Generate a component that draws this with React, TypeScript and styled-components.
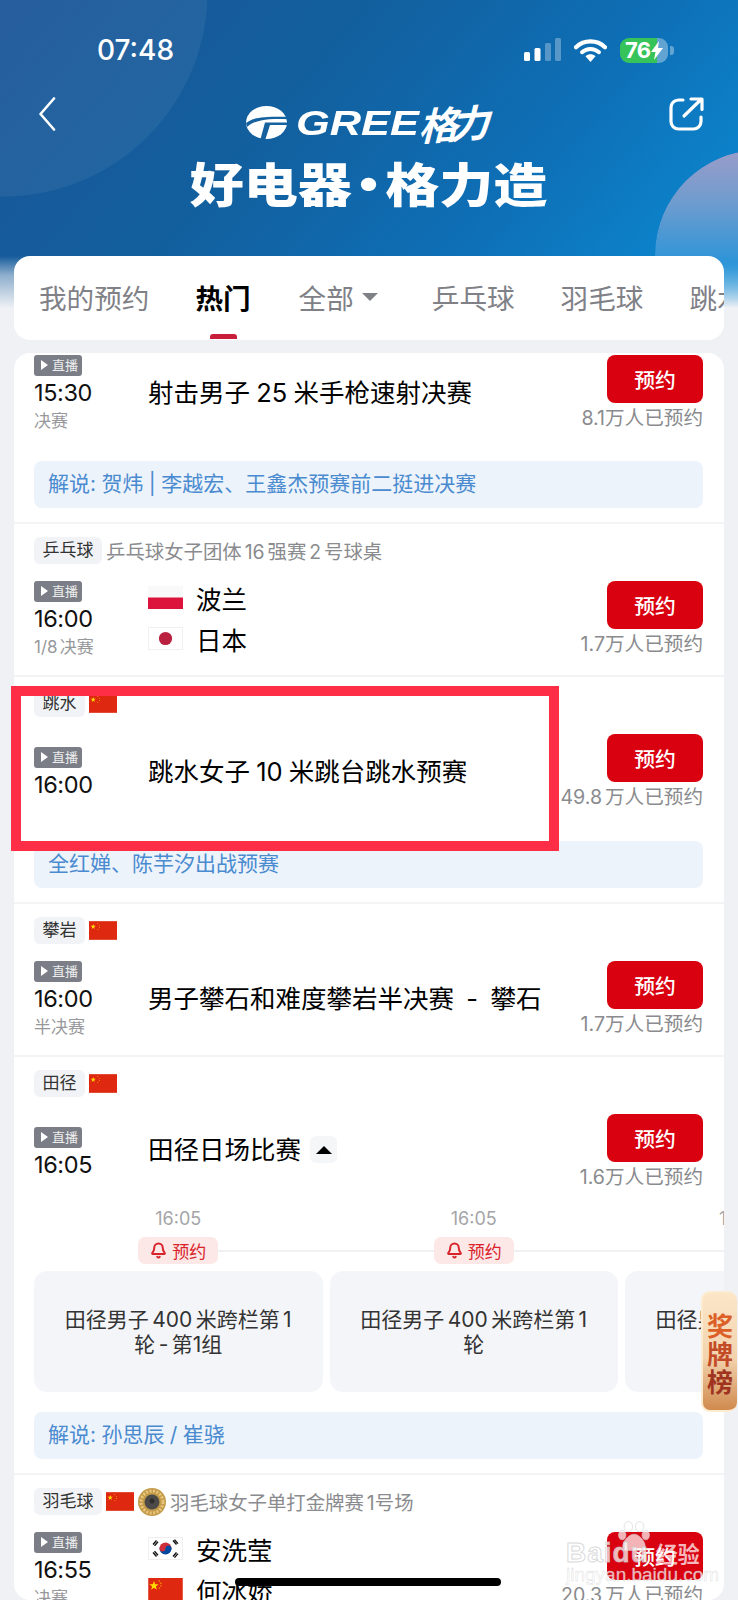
import React from 'react';
import styled, { createGlobalStyle } from 'styled-components';
import { Bell } from 'lucide-react';

const Global = createGlobalStyle`
  html, body { margin: 0; padding: 0; background: #eff1f5; }
  body { font-family: "Inter", "Noto Sans CJK SC", sans-serif; }
  * { box-sizing: border-box; }
`;

const Page = styled.div`
  position: relative;
  width: 738px;
  height: 1600px;
  overflow: hidden;
  display: flex;
  flex-direction: column;
  background: #eff1f5;
`;

const Hero = styled.header`
  position: relative;
  flex: none;
  padding: 34px 14px 0;
  height: 340px;
  color: #fff;
  background:
    linear-gradient(to bottom, rgba(239,241,245,0) 256px, rgba(239,241,245,.55) 275px, rgba(239,241,245,1) 308px),
    radial-gradient(circle 205px at 3px -8px, rgba(255,255,255,.055) 99.5%, rgba(255,255,255,0) 100%),
    linear-gradient(130deg, #1b5597 0%, #12609f 38%, #0e6fb6 65%, #0a90d8 100%);
`;

const Orb = styled.div`
  position: absolute;
  left: 655px;
  top: 150px;
  width: 210px;
  height: 210px;
  border-radius: 50%;
  background: linear-gradient(to bottom, #9a9cc9 0%, #6f9ccf 25%, #2a94d8 55%, #1a8fd8 70%);
  -webkit-mask-image: linear-gradient(to bottom, #000 50%, transparent 75%);
  mask-image: linear-gradient(to bottom, #000 50%, transparent 75%);
`;

const StatusRow = styled.div`
  position: relative;
  display: flex;
  align-items: center;
  justify-content: space-between;
  height: 32px;
  padding: 0 50px 0 83px;
`;

const Clock = styled.div`
  font-family: "Inter", sans-serif;
  font-size: 28px;
  font-weight: 500;
  line-height: 32px;
`;

const StatusIcons = styled.div`
  display: flex;
  align-items: center;
  gap: 13px;
`;

const Battery = styled.div`
  position: relative;
  width: 48px;
  height: 25px;
  border-radius: 9px;
  overflow: hidden;
  background: linear-gradient(to right, #36c45a 0 37px, rgba(255,255,255,.35) 37px);
  display: flex;
  align-items: center;
  gap: 1px;
  padding-left: 5px;
  font-family: "Inter", sans-serif;
  font-size: 22px;
  font-weight: 700;
  letter-spacing: -.8px;
`;

const BatteryTip = styled.div`
  width: 4px;
  height: 9px;
  margin-left: -11px;
  border-radius: 0 3px 3px 0;
  background: rgba(255,255,255,.35);
`;

const NavRow = styled.div`
  position: relative;
  display: flex;
  justify-content: space-between;
  align-items: flex-start;
  height: 110px;
  margin-top: 31px;
  padding: 0 20px 0 24px;
`;

const Brand = styled.div`
  display: flex;
  flex-direction: column;
  align-items: center;
  margin-left: 12px;
`;

const LogoRow = styled.div`
  display: flex;
  align-items: center;
  height: 50px;
  margin-left: -6px;
`;

const GreeText = styled.span`
  display: inline-block;
  width: 124px;
  margin-left: 9px;
  font-family: "Liberation Sans", sans-serif;
  font-size: 35px;
  font-weight: 700;
  font-style: italic;
  line-height: 1;
  transform: scaleX(1.24);
  transform-origin: left center;
`;

const GeliText = styled.span`
  display: inline-block;
  margin-left: 3px;
  font-family: "Noto Sans CJK SC", sans-serif;
  font-size: 39px;
  font-weight: 700;
  letter-spacing: -8px;
  line-height: 1;
  transform: skewX(-18deg) rotate(-4deg);
`;

const Slogan = styled.div`
  font-family: "Noto Sans CJK SC", sans-serif;
  font-size: 47px;
  font-weight: 900;
  line-height: 52px;
  margin-top: 9px;
  white-space: nowrap;
  transform: scaleX(1.15);
`;

const SloganDot = styled.span`
  margin: 0 -9px;
`;

const Tabs = styled.nav`
  position: relative;
  display: flex;
  align-items: center;
  gap: 46px;
  height: 84px;
  margin-top: 49px;
  padding: 0 0 2px 25px;
  overflow: hidden;
  background: #fff;
  border-radius: 16px;
  font-family: "Noto Sans CJK SC", sans-serif;
`;

const Tab = styled.div<{ $active?: boolean }>`
  position: relative;
  flex: none;
  display: flex;
  align-items: center;
  gap: 8px;
  font-size: 27.6px;
  line-height: 36px;
  font-weight: ${p => (p.$active ? 700 : 400)};
  color: ${p => (p.$active ? '#000' : '#7f8187')};
  margin-right: ${p => (p.$active ? 2 : 0)}px;
`;

const TabCaret = styled.i`
  width: 0;
  height: 0;
  margin-right: 8px;
  border-left: 8px solid transparent;
  border-right: 8px solid transparent;
  border-top: 8px solid #7f8187;
`;

const TabMark = styled.span`
  position: absolute;
  left: 15px;
  bottom: -24px;
  width: 27px;
  height: 5px;
  border-radius: 3px 3px 0 0;
  background: #c81e3a;
`;

const List = styled.main`
  flex: 1;
  min-height: 0;
  margin: 13px 14px 0;
  overflow: hidden;
  background: #fff;
  border-radius: 16px;
  font-family: "Inter", "Noto Sans CJK SC", sans-serif;
  word-spacing: -2.5px;
`;

const Row = styled.section<{ $first?: boolean; $bottom?: number }>`
  padding: ${p => (p.$first ? 2 : 13)}px 21px ${p => p.$bottom ?? 14}px 20px;
  border-top: ${p => (p.$first ? 0 : 2)}px solid #f3f4f6;
`;

const TagLine = styled.div`
  display: flex;
  align-items: center;
  gap: 4px;
  height: 27px;
  margin-bottom: 17px;
`;

const Tag = styled.span`
  height: 27px;
  padding: 0 8.5px;
  border-radius: 6px;
  background: #f2f3f6;
  color: #333;
  font-size: 17px;
  line-height: 27px;
`;

const SubTitle = styled.span`
  color: #8a8b8e;
  font-size: 19.4px;
  white-space: nowrap;
`;

const Main = styled.div`
  display: flex;
  align-items: center;
  height: 75px;
`;

const LeftCol = styled.div<{ $noSub?: boolean }>`
  flex: none;
  width: 114px;
  padding-top: ${p => (p.$noSub ? 4 : 0)}px;
`;

const Live = styled.div`
  display: flex;
  align-items: center;
  gap: 4px;
  width: 48px;
  height: 21px;
  padding-left: 7px;
  border-radius: 3px;
  background: #7b7e87;
  color: #eee;
  font-size: 13px;
  line-height: 21px;
  &::before {
    content: '';
    border-left: 7px solid #fff;
    border-top: 5px solid transparent;
    border-bottom: 5px solid transparent;
  }
`;

const Time = styled.div`
  font-size: 23.5px;
  line-height: 33px;
  letter-spacing: -.4px;
  color: #111;
`;

const Stage = styled.div`
  margin-top: 2px;
  color: #97989b;
  font-size: 17px;
  line-height: 20px;
  white-space: nowrap;
`;

const Middle = styled.div`
  flex: 1;
  min-width: 0;
  display: flex;
  flex-direction: column;
`;

const Teams = styled(Middle)`
  gap: 17px;
  margin-top: -2px;
`;

const TitleLine = styled.div`
  display: flex;
  align-items: center;
  gap: 9px;
  margin-top: -4px;
`;

const Title = styled.div`
  font-size: 25.5px;
  line-height: 34px;
  color: #000;
  white-space: nowrap;
  word-spacing: -1px;
`;

const Expand = styled.div`
  display: flex;
  align-items: center;
  justify-content: center;
  width: 27px;
  height: 27px;
  border-radius: 6px;
  background: #f5f6f8;
  &::before {
    content: '';
    border-left: 8px solid transparent;
    border-right: 8px solid transparent;
    border-bottom: 8px solid #000;
  }
`;

const Team = styled.div`
  display: flex;
  align-items: center;
  gap: 13px;
  height: 24px;
  font-size: 25.5px;
  color: #000;
  white-space: nowrap;
`;

const RightCol = styled.div`
  flex: none;
  display: flex;
  flex-direction: column;
  align-items: flex-end;
  gap: 3px;
  height: 75px;
`;

const Reserve = styled.button`
  width: 96px;
  height: 48px;
  padding: 0;
  border: 0;
  border-radius: 8px;
  background: #d9000f;
  color: #fff;
  font-family: "Noto Sans CJK SC", sans-serif;
  font-size: 20.8px;
  font-weight: 500;
`;

const Count = styled.div`
  color: #8a8b8e;
  font-size: 19.6px;
  line-height: 24px;
  white-space: nowrap;
`;

const Note = styled.div<{ $top?: number }>`
  height: 47px;
  margin-top: ${p => p.$top ?? 32}px;
  padding-left: 14px;
  border-radius: 8px;
  background: #edf3fb;
  color: #4a8bd0;
  font-size: 21px;
  line-height: 46px;
  white-space: nowrap;
  word-spacing: -.5px;
`;

const Track = styled.div`
  display: flex;
  gap: 7px;
  margin-top: 20px;
  margin-right: -21px;
  width: 690px;
`;

const Stop = styled.div<{ $w: number }>`
  flex: none;
  width: ${p => p.$w}px;
`;

const StopTime = styled.div`
  text-align: center;
  color: #a4a5a8;
  font-size: 18px;
  line-height: 20px;
`;

const PillLine = styled.div<{ $first?: boolean }>`
  position: relative;
  display: flex;
  justify-content: center;
  height: 27px;
  margin-top: 8px;
  &::before {
    content: '';
    position: absolute;
    left: ${p => (p.$first ? '50%' : '0')};
    right: -7px;
    top: 13px;
    height: 2px;
    background: #f1f1f3;
  }
`;

const Pill = styled.div`
  position: relative;
  display: flex;
  align-items: center;
  gap: 5px;
  width: 80px;
  height: 27px;
  padding-left: 12px;
  border-radius: 7px;
  background: #fde8e8;
  color: #d8232a;
  font-size: 17px;
`;

const StopCard = styled.div`
  display: flex;
  align-items: center;
  justify-content: center;
  height: 121px;
  margin-top: 7px;
  padding: 0 4px;
  border-radius: 13px;
  background: #f4f5f8;
  color: #333;
  font-size: 21px;
  line-height: 25px;
  text-align: center;
  white-space: pre-line;
`;

const Medals = styled.aside`
  position: absolute;
  right: 1px;
  top: 1291px;
  width: 36px;
  height: 121px;
  padding-top: 18px;
  border-radius: 9px;
  border: 2px solid #fcebcf;
  border-right: 0;
  background: linear-gradient(to bottom, #fbe6c8 0%, #f3d3ae 55%, #d08a4e 100%);
  font-family: "Noto Sans CJK SC", sans-serif;
  font-size: 26px;
  font-weight: 700;
  line-height: 28px;
  text-align: center;
`;

const MedalChar = styled.div<{ $c: string }>`
  color: ${p => p.$c};
`;

const Mark = styled.div`
  position: absolute;
  left: 11px;
  top: 686px;
  width: 548px;
  height: 165px;
  border: 10.5px solid #ff2e47;
`;

const Watermark = styled.div`
  position: absolute;
  left: 566px;
  top: 1520px;
  width: 134px;
  height: 70px;
  color: rgba(255,255,255,.72);
`;

const WmTop = styled.div`
  position: relative;
  display: flex;
  align-items: baseline;
  padding-top: 16px;
  font-family: "Liberation Sans", sans-serif;
  font-size: 28px;
  font-weight: 700;
  line-height: 32px;
  letter-spacing: 1px;
  -webkit-text-stroke: 1px rgba(200,200,200,.7);
`;

const WmCn = styled.span`
  margin-left: 7px;
  font-family: "Noto Sans CJK SC", sans-serif;
  font-size: 22px;
  letter-spacing: 0;
  -webkit-text-stroke: 0;
`;

const WmUrl = styled.div`
  margin-top: -4px;
  font-family: "Liberation Sans", sans-serif;
  font-size: 19px;
  line-height: 20px;
  -webkit-text-stroke: .4px rgba(200,200,200,.7);
  white-space: nowrap;
`;

const Paw = styled.svg`
  position: absolute;
  left: 52px;
  top: 1px;
`;

const HomeBar = styled.div`
  position: absolute;
  left: 235px;
  top: 1578px;
  width: 266px;
  height: 8px;
  border-radius: 4px;
  background: #000;
`;

const FlagSvg = styled.svg`
  flex: none;
  display: block;
`;

const CN = ({ w = 28, h = 19, big = false }: { w?: number; h?: number; big?: boolean }) => (
  <FlagSvg width={w} height={h} viewBox="0 0 30 20">
    <rect width="30" height="20" fill="#de2910" />
    {big ? (
      <polygon points="5,2.500 6,5.500 9,5.500 6.600,7.300 7.500,10.200 5,8.400 2.500,10.200 3.400,7.300 1,5.500 4,5.500" fill="#ffde00" />
    ) : (
      <polygon points="4.500,3 5.200,5 7.300,5 5.600,6.300 6.200,8.300 4.500,7.100 2.800,8.300 3.400,6.300 1.700,5 3.800,5" fill="#ffde00" />
    )}
    <circle cx="9.500" cy="2.500" r=".5" fill="#ffde00" />
    <circle cx="11" cy="4.500" r=".5" fill="#ffde00" />
    <circle cx="11" cy="6.800" r=".5" fill="#ffde00" />
    <circle cx="9.500" cy="8.800" r=".5" fill="#ffde00" />
  </FlagSvg>
);

const PL = () => (
  <FlagSvg width={35} height={23} viewBox="0 0 35 23">
    <rect width="35" height="11.5" fill="#f9f9f9" />
    <rect y="11.5" width="35" height="11.5" fill="#dc143c" />
  </FlagSvg>
);

const JP = () => (
  <FlagSvg width={35} height={23} viewBox="0 0 35 23">
    <rect x=".5" y=".5" width="34" height="22" fill="#fff" stroke="#f0f0f0" />
    <circle cx="17.5" cy="11.5" r="6.6" fill="#b9213f" />
  </FlagSvg>
);

const KR = () => (
  <FlagSvg width={35} height={23} viewBox="0 0 35 23">
    <rect x=".5" y=".5" width="34" height="22" fill="#fff" stroke="#efefef" />
    <path d="M11.5 11.5a6 6 0 0 1 12 0z" fill="#cd2e3a" />
    <path d="M11.5 11.5a6 6 0 0 0 12 0z" fill="#0047a0" />
    <circle cx="14.5" cy="11.5" r="3" fill="#cd2e3a" />
    <circle cx="20.5" cy="11.5" r="3" fill="#0047a0" />
    <g stroke="#111" strokeWidth="1.4">
      <path d="M5 7.5l3.500-4M6.500 8.800L10 4.800" />
      <path d="M25 3.500l3.500 4M26.500 2.600l3.500 4" />
      <path d="M5 15.500l3.500 4M6.500 14.200l3.500 4" />
      <path d="M25 19.500l3.500-4M26.500 20.600l3.500-4" />
    </g>
  </FlagSvg>
);

const GoldMedal = () => (
  <FlagSvg width={28} height={28} viewBox="0 0 28 28">
    <circle cx="14" cy="14" r="14" fill="#c39a4a" />
    <circle cx="14" cy="14" r="11" fill="none" stroke="#e6c77c" strokeWidth="3" strokeDasharray="2 1.5" />
    <circle cx="14" cy="14" r="7.5" fill="#4c4a48" />
    <circle cx="14" cy="13" r="2.5" fill="#2f2e2d" />
  </FlagSvg>
);

const Swirl = () => (
  <svg width="41" height="33" viewBox="0 0 41 33">
    <ellipse cx="20.5" cy="16.5" rx="20.5" ry="16.5" fill="#fff" />
    <path d="M0 17C6 12 14 10.500 41 10.800V13.200C30 12.800 22 13.200 15 14.500 9 15.700 4 18 1 21z" fill="#16629f" />
    <path d="M19 16.500H41V19H24L19.500 33H14.500z" fill="#16629f" />
  </svg>
);

type Ev = {
  live: string;
  stage?: string;
};

const Left = ({ live, stage }: Ev) => (
  <LeftCol $noSub={!stage}>
    <Live>直播</Live>
    <Time>{live}</Time>
    {stage && <Stage>{stage}</Stage>}
  </LeftCol>
);

const Right = ({ count }: { count: string }) => (
  <RightCol>
    <Reserve>预约</Reserve>
    <Count>{count}</Count>
  </RightCol>
);

const stops = [
  { w: 288.5, text: '田径男子 400 米跨栏第 1\n轮 - 第1组', time: '16:05', pill: true },
  { w: 288.5, text: '田径男子 400 米跨栏第 1\n轮', time: '16:05', pill: true },
  { w: 234, text: '田径男子 400 米跨\n栏第 1 轮', time: '16:05', pill: false },
];

export default function App() {
  return (
    <Page>
      <Global />
      <Hero>
        <Orb />
        <StatusRow>
          <Clock>07:48</Clock>
          <StatusIcons>
            <svg width="37" height="24" viewBox="0 0 37 24">
              <rect x="0" y="14" width="6" height="9" rx="1.5" fill="#fff" />
              <rect x="10.5" y="10" width="6" height="13" rx="1.5" fill="#fff" />
              <rect x="21" y="5" width="6" height="18" rx="1.5" fill="#fff" fillOpacity=".3" />
              <rect x="31" y="0" width="6" height="23" rx="1.5" fill="#fff" fillOpacity=".3" />
            </svg>
            <svg width="33" height="24" viewBox="0 0 33 24">
              <path d="M2 9.200C10 1.500 23 1.500 31 9.200" fill="none" stroke="#fff" strokeWidth="4.2" strokeLinecap="round" />
              <path d="M8 14.200c5-4.400 12-4.400 17 0" fill="none" stroke="#fff" strokeWidth="4" strokeLinecap="round" />
              <path d="M11.500 18.200c3-2.600 7-2.600 10 0L16.500 24z" fill="#fff" />
            </svg>
            <Battery>
              76
              <svg width="12" height="19" viewBox="0 0 12 19">
                <path d="M8 0L0 11h4.500L3 19l9-12H7z" fill="#fff" />
              </svg>
            </Battery>
            <BatteryTip />
          </StatusIcons>
        </StatusRow>
        <NavRow>
          <svg width="18" height="34" viewBox="0 0 18 34">
            <path d="M16 1.500L2.500 17L16 32.500" fill="none" stroke="#fff" strokeWidth="2.6" strokeLinecap="round" strokeLinejoin="round" />
          </svg>
          <Brand>
            <LogoRow>
              <Swirl />
              <GreeText>GREE</GreeText>
              <GeliText>格力</GeliText>
            </LogoRow>
            <Slogan>好电器<SloganDot>·</SloganDot>格力造</Slogan>
          </Brand>
          <svg width="35" height="34" viewBox="0 0 35 34">
            <path d="M14 3H9.500A7.500 7.500 0 0 0 2 10.500V24.500A7.500 7.500 0 0 0 9.500 32H24.500A7.500 7.500 0 0 0 32 24.500V20" fill="none" stroke="#fff" strokeWidth="3.2" strokeLinecap="round" />
            <path d="M15 19L32 2.500M22 2H33V12.500" fill="none" stroke="#fff" strokeWidth="3.2" strokeLinecap="round" strokeLinejoin="round" />
          </svg>
        </NavRow>
        <Tabs>
          <Tab>我的预约</Tab>
          <Tab $active>热门<TabMark /></Tab>
          <Tab>全部<TabCaret /></Tab>
          <Tab>乒乓球</Tab>
          <Tab>羽毛球</Tab>
          <Tab>跳水</Tab>
        </Tabs>
      </Hero>

      <List>
        <Row $first>
          <Main>
            <Left live="15:30" stage="决赛" />
            <Middle><Title>射击男子 25 米手枪速射决赛</Title></Middle>
            <Right count="8.1万人已预约" />
          </Main>
          <Note $top={31}>解说: 贺炜 | 李越宏、王鑫杰预赛前二挺进决赛</Note>
        </Row>

        <Row $bottom={19}>
          <TagLine>
            <Tag>乒乓球</Tag>
            <SubTitle>乒乓球女子团体 16 强赛 2 号球桌</SubTitle>
          </TagLine>
          <Main>
            <Left live="16:00" stage="1/8 决赛" />
            <Teams>
              <Team><PL />波兰</Team>
              <Team><JP />日本</Team>
            </Teams>
            <Right count="1.7万人已预约" />
          </Main>
        </Row>

        <Row>
          <TagLine>
            <Tag>跳水</Tag>
            <CN />
          </TagLine>
          <Main>
            <Left live="16:00" />
            <Middle><Title>跳水女子 10 米跳台跳水预赛</Title></Middle>
            <Right count="49.8 万人已预约" />
          </Main>
          <Note>全红婵、陈芋汐出战预赛</Note>
        </Row>

        <Row $bottom={19}>
          <TagLine>
            <Tag>攀岩</Tag>
            <CN />
          </TagLine>
          <Main>
            <Left live="16:00" stage="半决赛" />
            <Middle><Title>男子攀石和难度攀岩半决赛{'\u00A0\u00A0'}-{'\u00A0\u00A0'}攀石</Title></Middle>
            <Right count="1.7万人已预约" />
          </Main>
        </Row>

        <Row>
          <TagLine>
            <Tag>田径</Tag>
            <CN />
          </TagLine>
          <Main>
            <Left live="16:05" />
            <Middle>
              <TitleLine>
                <Title>田径日场比赛</Title>
                <Expand />
              </TitleLine>
            </Middle>
            <Right count="1.6万人已预约" />
          </Main>
          <Track>
            {stops.map((s, i) => (
              <Stop key={i} $w={s.w}>
                <StopTime>{s.time}</StopTime>
                <PillLine $first={i === 0}>
                  {s.pill && (
                    <Pill>
                      <Bell size={17} strokeWidth={2.8} />
                      预约
                    </Pill>
                  )}
                </PillLine>
                <StopCard>{s.text}</StopCard>
              </Stop>
            ))}
          </Track>
          <Note $top={20}>解说: 孙思辰 / 崔骁</Note>
        </Row>

        <Row>
          <TagLine>
            <Tag>羽毛球</Tag>
            <CN />
            <GoldMedal />
            <SubTitle>羽毛球女子单打金牌赛 1号场</SubTitle>
          </TagLine>
          <Main>
            <Left live="16:55" stage="决赛" />
            <Teams>
              <Team><KR />安洗莹</Team>
              <Team><CN w={35} h={23} big />何冰娇</Team>
            </Teams>
            <Right count="20.3 万人已预约" />
          </Main>
        </Row>
      </List>

      <Medals>
        <MedalChar $c="#dc5f28">奖</MedalChar>
        <MedalChar $c="#c24a26">牌</MedalChar>
        <MedalChar $c="#a03320">榜</MedalChar>
      </Medals>

      <Mark />

      <Watermark>
        <Paw width="32" height="32" viewBox="0 0 34 34">
          <g fill="rgba(255,255,255,.7)" stroke="rgba(205,205,205,.6)">
            <ellipse cx="11" cy="6" rx="4.500" ry="5.500" />
            <ellipse cx="23" cy="6" rx="4.500" ry="5.500" />
            <ellipse cx="4.500" cy="15" rx="4" ry="5" />
            <ellipse cx="29.500" cy="15" rx="4" ry="5" />
            <path d="M17 14c-6 0-12 8-12 13 0 6 8 4 12 4s12 2 12-4c0-5-6-13-12-13z" />
          </g>
        </Paw>
        <WmTop>Baidu<WmCn>经验</WmCn></WmTop>
        <WmUrl>jingyan.baidu.com</WmUrl>
      </Watermark>

      <HomeBar />
    </Page>
  );
}
